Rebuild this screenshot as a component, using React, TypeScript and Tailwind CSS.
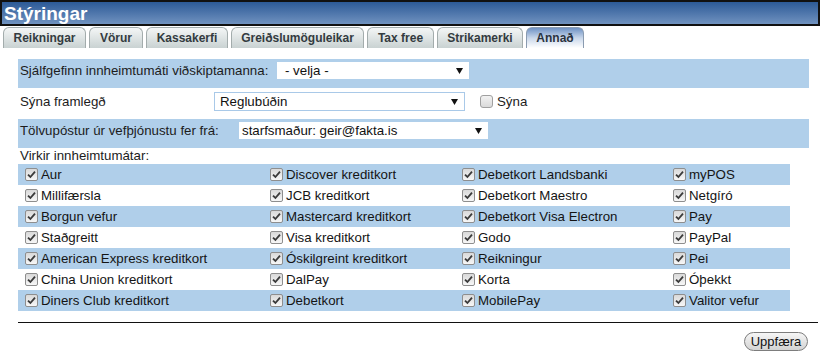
import React from 'react';

const tabs = [
  { label: 'Reikningar', w: 'w-[83px]' },
  { label: 'Vörur', w: 'w-[54px]' },
  { label: 'Kassakerfi', w: 'w-[82px]' },
  { label: 'Greiðslumöguleikar', w: 'w-[133px]' },
  { label: 'Tax free', w: 'w-[67px]' },
  { label: 'Strikamerki', w: 'w-[86px]' },
  { label: 'Annað', w: 'w-[58px]', active: true },
];

const methods = [
  ['Aur', 'Discover kreditkort', 'Debetkort Landsbanki', 'myPOS'],
  ['Millifærsla', 'JCB kreditkort', 'Debetkort Maestro', 'Netgíró'],
  ['Borgun vefur', 'Mastercard kreditkort', 'Debetkort Visa Electron', 'Pay'],
  ['Staðgreitt', 'Visa kreditkort', 'Godo', 'PayPal'],
  ['American Express kreditkort', 'Óskilgreint kreditkort', 'Reikningur', 'Pei'],
  ['China Union kreditkort', 'DalPay', 'Korta', 'Óþekkt'],
  ['Diners Club kreditkort', 'Debetkort', 'MobilePay', 'Valitor vefur'],
];

const Check = ({ checked = true }: { checked?: boolean }) => (
  <span className="flex h-[13px] w-[13px] shrink-0 items-center justify-center rounded-[2px] border border-[#8e8e8e] bg-linear-to-b from-[#d9d9d9] to-[#f7f7f7]">
    {checked && (
      <svg width="9" height="9" viewBox="0 0 9 9">
        <path d="M1 4.6 L3.4 7 L8 1.6" fill="none" stroke="#3a3a3a" strokeWidth="1.8" />
      </svg>
    )}
  </span>
);

const Select = ({ text, w, bordered, pl }: { text: string; w: string; bordered?: boolean; pl: string }) => (
  <div
    className={`flex items-center justify-between bg-white pr-[6px] ${pl} ${w} ${
      bordered ? 'h-[19px] border border-[#a9c9e8]' : 'h-[17px]'
    }`}
  >
    <span className="leading-none text-[#111]">{text}</span>
    <svg width="7" height="6" viewBox="0 0 7 6">
      <path d="M0 0 H7 L3.5 6 Z" fill="#111" />
    </svg>
  </div>
);

export default function App() {
  return (
    <div className="h-[360px] w-[822px] overflow-hidden bg-white font-['Liberation_Sans',Arial,sans-serif] text-[13.3px] text-[#1c1c1c]">
      <div className="flex h-[26px] w-[820px] items-center border-2 border-[#111] bg-linear-to-b from-[#2c5a97] to-[#7092bf] pl-[2px]">
        <span className="text-[19px] font-bold leading-none text-white">Stýringar</span>
      </div>

      <div className="mt-[1px] flex h-[21px] gap-[3px] pl-[3px]">
        {tabs.map((t) => (
          <div
            key={t.label}
            className={`flex items-center justify-center rounded-t-[6px] border border-b-0 text-[12px] font-bold ${t.w} ${
              t.active
                ? 'border-[#8a9bb0] bg-linear-to-b from-[#6f92c4] via-[#c9d7ea] to-white text-[#2a3340]'
                : 'border-[#a3acac] bg-linear-to-b from-[#f4f6f6] to-[#c9d2d2] text-[#333b40]'
            }`}
          >
            {t.label}
          </div>
        ))}
      </div>

      <div className="mt-[11px] pl-[18px]">
        <div className="flex h-[29px] w-[791px] items-start bg-[#b0cfea] pt-[3px]">
          <div className="flex h-[17px] w-[259px] items-center pl-[2px]">Sjálfgefinn innheimtumáti viðskiptamanna:</div>
          <Select text="- velja -" w="w-[192px]" pl="pl-[8px]" />
        </div>

        <div className="flex h-[31px] w-[791px] items-start pt-[4px]">
          <div className="flex h-[19px] w-[196px] items-center pl-[2px]">Sýna framlegð</div>
          <Select text="Reglubúðin" w="w-[251px]" bordered pl="pl-[5px]" />
          <div className="ml-[15px] flex h-[19px] items-center gap-[4px]">
            <span className="h-[13px] w-[13px] rounded-[3px] border border-[#a0a0a0] bg-linear-to-b from-[#f2f2f2] to-[#dadada]" />
            <span>Sýna</span>
          </div>
        </div>

        <div className="flex h-[29px] w-[791px] items-start bg-[#b0cfea] pt-[3px]">
          <div className="flex h-[17px] w-[221px] items-center pl-[2px]">Tölvupóstur úr vefþjónustu fer frá:</div>
          <Select text="starfsmaður: geir@fakta.is" w="w-[249px]" pl="pl-[3px]" />
        </div>

        <div className="flex h-[16px] items-center pl-[2px]">Virkir innheimtumátar:</div>

        <div className="w-[772px]">
          {methods.map((row, i) => (
            <div
              key={i}
              className={`grid h-[21px] grid-cols-[245px_192px_211px_1fr] items-center ${
                i % 2 === 0 ? 'bg-[#b0cfea]' : 'bg-white'
              }`}
            >
              {row.map((m) => (
                <div key={m} className="flex items-center gap-[3px] pl-[7px]">
                  <Check />
                  <span className="leading-none text-[#141414]">{m}</span>
                </div>
              ))}
            </div>
          ))}
        </div>

        <div className="mt-[11px] h-px w-[800px] bg-[#111]" />

        <div className="mt-[9px] flex w-[790px] justify-end">
          <button className="flex h-[19px] w-[64px] items-center justify-center rounded-full border border-[#7d7d7d] bg-linear-to-b from-[#f6f6f6] to-[#d3d3d3] text-[13px] leading-none text-[#111]">
            Uppfæra
          </button>
        </div>
      </div>
    </div>
  );
}
